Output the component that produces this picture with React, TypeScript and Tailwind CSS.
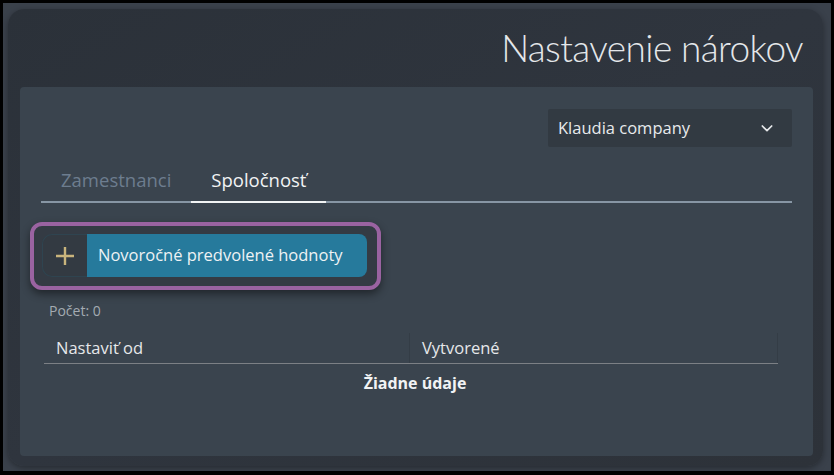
import React, { useState } from "react";

const font = { fontFamily: '"Open Sans", "Noto Sans", Arial, sans-serif' };

export default function App() {
  const [tab, setTab] = useState(1);

  return (
    <div className="w-[834px] h-[475px] bg-black pt-[3px] px-[3px] pb-[4px]" style={font}>
      <div className="h-full bg-[#3a414b] pt-[6px] pl-[5px] pr-[8px] pb-[5px]">
        <div className="h-full rounded-[16px] bg-gradient-to-br from-[#2b3139] via-[#2f353e] to-[#2d3239] pl-[12px] pr-[10px] pb-[10px] flex flex-col shadow-[0_2px_6px_rgba(0,0,0,0.35)]">
          <div className="h-[78px] flex items-center justify-end pr-[10px]">
            <h1 className="text-[37px] font-light text-[#e4e7ea] tracking-[-0.6px]" style={{ fontFamily: '"Lato", "Open Sans", sans-serif' }}>
              Nastavenie nárokov
            </h1>
          </div>

          <div className="flex-1 rounded-[4px] bg-[#3a444e] px-[21px] pt-[22px]">
            <div className="flex justify-end">
              <button className="w-[244px] h-[38px] bg-[#323a42] rounded-[2px] flex items-center justify-between pl-[10px] pr-[17px] text-[16.5px] text-[#e8eaec]">
                <span>Klaudia company</span>
                <svg width="16" height="16" viewBox="0 0 24 24" fill="none" stroke="#e6e8ea" strokeWidth="2.6" strokeLinecap="round" strokeLinejoin="round">
                  <path d="M5 9l7 7 7-7" />
                </svg>
              </button>
            </div>

            <div className="mt-[10px] flex border-b-2 border-[#8796a4]">
              {["Zamestnanci", "Spoločnosť"].map((t, i) => (
                <button
                  key={t}
                  onClick={() => setTab(i)}
                  className={
                    "h-[46px] px-[20px] pt-[2px] text-[18.5px] -mb-[2px] border-b-2 " +
                    (tab === i ? "text-[#f1f3f4] border-[#f1f3f4]" : "text-[#6d7d8f] border-transparent")
                  }
                >
                  {t}
                </button>
              ))}
            </div>

            <div className="mt-[19px] ml-[-11px] inline-flex rounded-[12px] border-4 border-[#9a63a1] bg-[#343b44] pt-[8px] pl-[8px] pr-[10px] pb-[9px] shadow-[0_4px_8px_rgba(0,0,0,0.45)]">
              <div className="flex h-[43px] w-[325px]">
                <div className="w-[45px] flex items-center justify-center rounded-l-[10px] bg-[#333a42] border border-r-0 border-[#2f4450]">
                  <svg width="20" height="20" viewBox="0 0 20 20" stroke="#c9b47c" strokeWidth="2.4" strokeLinecap="butt">
                    <path d="M10 1v18M1 10h18" />
                  </svg>
                </div>
                <div className="flex-1 flex items-center bg-[#267a9c] rounded-r-[8px] pl-[11px] text-[16.5px] text-[#eef2f4]">
                  Novoročné predvolené hodnoty
                </div>
              </div>
            </div>

            <div className="mt-[10px] ml-[8px] text-[14px] text-[#a4abb2]">Počet: 0</div>

            <div className="mt-[12px] ml-[3px] mr-[14px]">
              <div className="grid grid-cols-[366px_1fr] h-[31px] border-b border-[#7c8085] text-[16.5px] text-[#e6e8ea]">
                <div className="flex items-center pl-[12px] border-r border-[#343d46]">Nastaviť od</div>
                <div className="flex items-center pl-[12px] border-r border-[#343d46]">Vytvorené</div>
              </div>
              <div className="h-[38px] flex items-center justify-center text-[16px] font-bold text-[#f1f3f4] pl-[8px]">
                Žiadne údaje
              </div>
            </div>
          </div>
        </div>
      </div>
    </div>
  );
}
